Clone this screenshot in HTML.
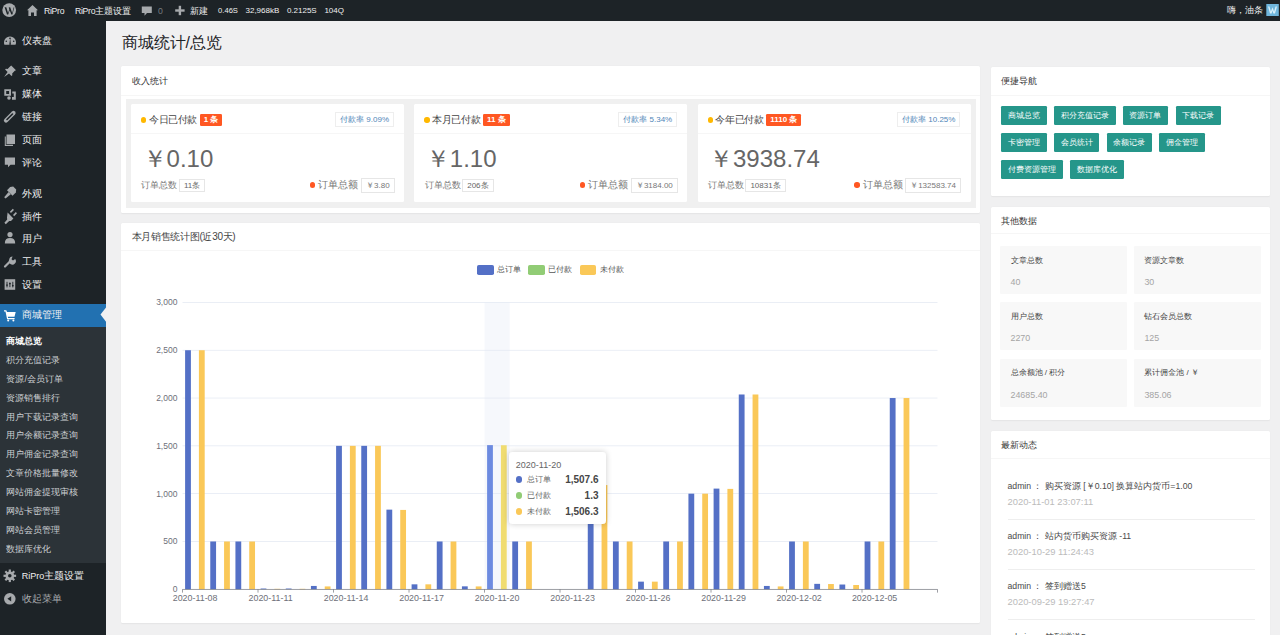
<!DOCTYPE html><html><head><meta charset="utf-8"><style>
html,body{margin:0;padding:0;}
body{width:1280px;height:635px;overflow:hidden;background:#f0f0f1;position:relative;font-family:"Liberation Sans",sans-serif;}
.t{position:absolute;white-space:nowrap;}
.b{position:absolute;box-sizing:border-box;}
svg{position:absolute;left:0;top:0;}
</style></head><body>
<div class="b" style="left:0.00px;top:0.00px;width:1280.00px;height:20.80px;background:#1d2327;"></div>
<div class="t" style="left:44.00px;top:4.00px;line-height:14px;height:14px;font-size:8.67px;color:#f0f0f1;font-weight:normal;letter-spacing:-0.3px;">RiPro</div>
<div class="t" style="left:75.00px;top:4.00px;line-height:14px;height:14px;font-size:8.67px;color:#f0f0f1;font-weight:normal;"><span style="font-size:8.67px;letter-spacing:-0.3px">RiPro</span>主题设置</div>
<div class="t" style="left:158.00px;top:4.00px;line-height:14px;height:14px;font-size:8.67px;color:#777c80;font-weight:normal;">0</div>
<div class="t" style="left:190.40px;top:4.00px;line-height:14px;height:14px;font-size:8.67px;color:#f0f0f1;font-weight:normal;">新建</div>
<div class="t" style="left:218.10px;top:4.10px;line-height:14px;height:14px;font-size:7.6px;color:#f0f0f1;font-weight:normal;">0.46S</div>
<div class="t" style="left:245.50px;top:4.10px;line-height:14px;height:14px;font-size:8.0px;color:#f0f0f1;font-weight:normal;">32,968kB</div>
<div class="t" style="left:286.90px;top:4.10px;line-height:14px;height:14px;font-size:8.0px;color:#f0f0f1;font-weight:normal;">0.2125S</div>
<div class="t" style="left:324.40px;top:4.10px;line-height:14px;height:14px;font-size:8.0px;color:#f0f0f1;font-weight:normal;">104Q</div>
<div class="t" style="left:1226.90px;top:3.00px;line-height:14px;height:14px;font-size:8.67px;color:#f0f0f1;font-weight:normal;">嗨，油条</div>
<div class="b" style="left:0.00px;top:20.80px;width:106.00px;height:614.20px;background:#1d2327;"></div>
<div class="b" style="left:0.00px;top:303.60px;width:106.00px;height:23.30px;background:#2271b1;"></div>
<div class="b" style="left:0.00px;top:326.90px;width:106.00px;height:236.60px;background:#2c3338;"></div>
<div class="t" style="left:21.80px;top:34.20px;line-height:14px;height:14px;font-size:10.0px;color:#f0f0f1;font-weight:normal;">仪表盘</div>
<div class="t" style="left:21.80px;top:64.30px;line-height:14px;height:14px;font-size:10.0px;color:#f0f0f1;font-weight:normal;">文章</div>
<div class="t" style="left:21.80px;top:87.30px;line-height:14px;height:14px;font-size:10.0px;color:#f0f0f1;font-weight:normal;">媒体</div>
<div class="t" style="left:21.80px;top:110.20px;line-height:14px;height:14px;font-size:10.0px;color:#f0f0f1;font-weight:normal;">链接</div>
<div class="t" style="left:21.80px;top:133.30px;line-height:14px;height:14px;font-size:10.0px;color:#f0f0f1;font-weight:normal;">页面</div>
<div class="t" style="left:21.80px;top:156.20px;line-height:14px;height:14px;font-size:10.0px;color:#f0f0f1;font-weight:normal;">评论</div>
<div class="t" style="left:21.80px;top:187.30px;line-height:14px;height:14px;font-size:10.0px;color:#f0f0f1;font-weight:normal;">外观</div>
<div class="t" style="left:21.80px;top:210.10px;line-height:14px;height:14px;font-size:10.0px;color:#f0f0f1;font-weight:normal;">插件</div>
<div class="t" style="left:21.80px;top:232.40px;line-height:14px;height:14px;font-size:10.0px;color:#f0f0f1;font-weight:normal;">用户</div>
<div class="t" style="left:21.80px;top:255.20px;line-height:14px;height:14px;font-size:10.0px;color:#f0f0f1;font-weight:normal;">工具</div>
<div class="t" style="left:21.80px;top:278.30px;line-height:14px;height:14px;font-size:10.0px;color:#f0f0f1;font-weight:normal;">设置</div>
<div class="t" style="left:21.80px;top:308.40px;line-height:14px;height:14px;font-size:10.0px;color:#f0f0f1;font-weight:normal;">商城管理</div>
<div class="t" style="left:6.40px;top:333.80px;line-height:14px;height:14px;font-size:8.67px;color:#ffffff;font-weight:bold;">商城总览</div>
<div class="t" style="left:6.40px;top:352.73px;line-height:14px;height:14px;font-size:8.67px;color:#cdd0d3;font-weight:normal;">积分充值记录</div>
<div class="t" style="left:6.40px;top:371.66px;line-height:14px;height:14px;font-size:8.67px;color:#cdd0d3;font-weight:normal;">资源/会员订单</div>
<div class="t" style="left:6.40px;top:390.59px;line-height:14px;height:14px;font-size:8.67px;color:#cdd0d3;font-weight:normal;">资源销售排行</div>
<div class="t" style="left:6.40px;top:409.52px;line-height:14px;height:14px;font-size:8.67px;color:#cdd0d3;font-weight:normal;">用户下载记录查询</div>
<div class="t" style="left:6.40px;top:428.45px;line-height:14px;height:14px;font-size:8.67px;color:#cdd0d3;font-weight:normal;">用户余额记录查询</div>
<div class="t" style="left:6.40px;top:447.38px;line-height:14px;height:14px;font-size:8.67px;color:#cdd0d3;font-weight:normal;">用户佣金记录查询</div>
<div class="t" style="left:6.40px;top:466.31px;line-height:14px;height:14px;font-size:8.67px;color:#cdd0d3;font-weight:normal;">文章价格批量修改</div>
<div class="t" style="left:6.40px;top:485.24px;line-height:14px;height:14px;font-size:8.67px;color:#cdd0d3;font-weight:normal;">网站佣金提现审核</div>
<div class="t" style="left:6.40px;top:504.17px;line-height:14px;height:14px;font-size:8.67px;color:#cdd0d3;font-weight:normal;">网站卡密管理</div>
<div class="t" style="left:6.40px;top:523.10px;line-height:14px;height:14px;font-size:8.67px;color:#cdd0d3;font-weight:normal;">网站会员管理</div>
<div class="t" style="left:6.40px;top:542.03px;line-height:14px;height:14px;font-size:8.67px;color:#cdd0d3;font-weight:normal;">数据库优化</div>
<div class="t" style="left:21.80px;top:568.80px;line-height:14px;height:14px;font-size:10.0px;color:#f0f0f1;font-weight:normal;"><span style="font-size:9.0px">RiPro</span>主题设置</div>
<div class="t" style="left:21.80px;top:591.80px;line-height:14px;height:14px;font-size:10.0px;color:#a7aaad;font-weight:normal;">收起菜单</div>
<div class="t" style="left:121.50px;top:33.00px;line-height:20px;height:20px;font-size:15.85px;color:#1d2327;font-weight:normal;">商城统计/总览</div>
<div class="b" style="left:121.40px;top:66.10px;width:858.70px;height:147.00px;background:#fff;border-radius:1.5px;box-shadow:0 0.67px 1.33px rgba(0,0,0,.05);"></div>
<div class="b" style="left:121.40px;top:94.63px;width:858.70px;height:0.67px;background:#f6f6f6;"></div>
<div class="t" style="left:131.50px;top:73.80px;line-height:14px;height:14px;font-size:9.33px;color:#333;font-weight:normal;">收入统计</div>
<div class="b" style="left:126.10px;top:99.30px;width:849.60px;height:108.70px;background:#f0f0f0;"></div>
<div class="b" style="left:131.10px;top:104.30px;width:273.20px;height:98.20px;background:#fff;border-radius:1.5px;"></div>
<div class="b" style="left:131.10px;top:133.20px;width:273.20px;height:0.67px;background:#f6f6f6;"></div>
<div class="b" style="left:141.10px;top:117.20px;width:5.40px;height:5.40px;background:#FFB800;border-radius:50%;"></div>
<div class="t" style="left:148.90px;top:112.90px;line-height:14px;height:14px;font-size:10px;color:#444;font-weight:normal;letter-spacing:-0.35px;">今日已付款</div>
<div class="t" style="left:199.80px;top:114.3px;height:11.8px;line-height:11.8px;padding:0 4px;background:#FF5722;color:#fff;font-size:8px;font-weight:bold;border-radius:1.33px;">1 条</div>
<div class="t" style="right:886.00px;top:112.4px;height:14.6px;line-height:13.3px;padding:0 4px;box-sizing:border-box;border:0.67px solid #eeeeee;background:#fff;color:#4f86b8;font-size:8px;">付款率 9.09%</div>
<div class="t" style="left:142.60px;top:145.20px;line-height:28px;height:28px;font-size:24px;color:#666;font-weight:normal;">￥0.10</div>
<div class="t" style="left:141.40px;top:178.40px;line-height:14px;height:14px;font-size:8.67px;color:#777;font-weight:normal;">订单总数</div>
<div class="t" style="left:179.00px;top:179.2px;height:12.8px;line-height:11.5px;padding:0 4px;box-sizing:border-box;border:0.67px solid #e6e6e6;background:#fff;color:#666;font-size:8px;">11条</div>
<div class="t" style="right:885.40px;top:177.9px;height:14.7px;display:flex;align-items:center;font-size:10px;color:#777;"><span style="display:inline-block;width:5.5px;height:5.5px;border-radius:50%;background:#FF5722;margin-right:3px;"></span><span style="line-height:14px">订单总额</span><span style="display:inline-block;margin-left:2.6px;height:14.7px;line-height:13.4px;padding:0 4px;box-sizing:border-box;border:0.67px solid #e6e6e6;font-size:8px;">￥3.80</span></div>
<div class="b" style="left:414.30px;top:104.30px;width:273.20px;height:98.20px;background:#fff;border-radius:1.5px;"></div>
<div class="b" style="left:414.30px;top:133.20px;width:273.20px;height:0.67px;background:#f6f6f6;"></div>
<div class="b" style="left:424.30px;top:117.20px;width:5.40px;height:5.40px;background:#FFB800;border-radius:50%;"></div>
<div class="t" style="left:432.10px;top:112.90px;line-height:14px;height:14px;font-size:10px;color:#444;font-weight:normal;letter-spacing:-0.35px;">本月已付款</div>
<div class="t" style="left:483.00px;top:114.3px;height:11.8px;line-height:11.8px;padding:0 4px;background:#FF5722;color:#fff;font-size:8px;font-weight:bold;border-radius:1.33px;">11 条</div>
<div class="t" style="right:602.80px;top:112.4px;height:14.6px;line-height:13.3px;padding:0 4px;box-sizing:border-box;border:0.67px solid #eeeeee;background:#fff;color:#4f86b8;font-size:8px;">付款率 5.34%</div>
<div class="t" style="left:425.80px;top:145.20px;line-height:28px;height:28px;font-size:24px;color:#666;font-weight:normal;">￥1.10</div>
<div class="t" style="left:424.60px;top:178.40px;line-height:14px;height:14px;font-size:8.67px;color:#777;font-weight:normal;">订单总数</div>
<div class="t" style="left:462.20px;top:179.2px;height:12.8px;line-height:11.5px;padding:0 4px;box-sizing:border-box;border:0.67px solid #e6e6e6;background:#fff;color:#666;font-size:8px;">206条</div>
<div class="t" style="right:602.20px;top:177.9px;height:14.7px;display:flex;align-items:center;font-size:10px;color:#777;"><span style="display:inline-block;width:5.5px;height:5.5px;border-radius:50%;background:#FF5722;margin-right:3px;"></span><span style="line-height:14px">订单总额</span><span style="display:inline-block;margin-left:2.6px;height:14.7px;line-height:13.4px;padding:0 4px;box-sizing:border-box;border:0.67px solid #e6e6e6;font-size:8px;">￥3184.00</span></div>
<div class="b" style="left:697.50px;top:104.30px;width:273.20px;height:98.20px;background:#fff;border-radius:1.5px;"></div>
<div class="b" style="left:697.50px;top:133.20px;width:273.20px;height:0.67px;background:#f6f6f6;"></div>
<div class="b" style="left:707.50px;top:117.20px;width:5.40px;height:5.40px;background:#FFB800;border-radius:50%;"></div>
<div class="t" style="left:715.30px;top:112.90px;line-height:14px;height:14px;font-size:10px;color:#444;font-weight:normal;letter-spacing:-0.35px;">今年已付款</div>
<div class="t" style="left:766.20px;top:114.3px;height:11.8px;line-height:11.8px;padding:0 4px;background:#FF5722;color:#fff;font-size:8px;font-weight:bold;border-radius:1.33px;">1110 条</div>
<div class="t" style="right:319.60px;top:112.4px;height:14.6px;line-height:13.3px;padding:0 4px;box-sizing:border-box;border:0.67px solid #eeeeee;background:#fff;color:#4f86b8;font-size:8px;">付款率 10.25%</div>
<div class="t" style="left:709.00px;top:145.20px;line-height:28px;height:28px;font-size:24px;color:#666;font-weight:normal;">￥3938.74</div>
<div class="t" style="left:707.80px;top:178.40px;line-height:14px;height:14px;font-size:8.67px;color:#777;font-weight:normal;">订单总数</div>
<div class="t" style="left:745.40px;top:179.2px;height:12.8px;line-height:11.5px;padding:0 4px;box-sizing:border-box;border:0.67px solid #e6e6e6;background:#fff;color:#666;font-size:8px;">10831条</div>
<div class="t" style="right:319.00px;top:177.9px;height:14.7px;display:flex;align-items:center;font-size:10px;color:#777;"><span style="display:inline-block;width:5.5px;height:5.5px;border-radius:50%;background:#FF5722;margin-right:3px;"></span><span style="line-height:14px">订单总额</span><span style="display:inline-block;margin-left:2.6px;height:14.7px;line-height:13.4px;padding:0 4px;box-sizing:border-box;border:0.67px solid #e6e6e6;font-size:8px;">￥132583.74</span></div>
<div class="b" style="left:121.40px;top:222.50px;width:858.70px;height:400.60px;background:#fff;border-radius:1.5px;box-shadow:0 0.67px 1.33px rgba(0,0,0,.05);"></div>
<div class="b" style="left:121.40px;top:250.33px;width:858.70px;height:0.67px;background:#f6f6f6;"></div>
<div class="t" style="left:131.50px;top:230.20px;line-height:14px;height:14px;font-size:9.33px;color:#333;font-weight:normal;"></div>
<div class="t" style="left:131.50px;top:230.20px;line-height:14px;height:14px;font-size:10px;color:#444;font-weight:normal;letter-spacing:-0.3px;">本月销售统计图(近30天)</div>
<div class="b" style="left:990.60px;top:66.60px;width:279.80px;height:129.70px;background:#fff;border-radius:1.5px;box-shadow:0 0.67px 1.33px rgba(0,0,0,.05);"></div>
<div class="b" style="left:990.60px;top:94.63px;width:279.80px;height:0.67px;background:#f6f6f6;"></div>
<div class="t" style="left:1000.70px;top:74.30px;line-height:14px;height:14px;font-size:9.33px;color:#333;font-weight:normal;">便捷导航</div>
<div class="b" style="left:1001.10px;top:105.60px;width:45.50px;height:19.70px;background:#25968a;border-radius:1.33px;color:#fff;font-size:8px;line-height:19.70px;text-align:center;white-space:nowrap">商城总览</div>
<div class="b" style="left:1053.90px;top:105.60px;width:61.70px;height:19.70px;background:#25968a;border-radius:1.33px;color:#fff;font-size:8px;line-height:19.70px;text-align:center;white-space:nowrap">积分充值记录</div>
<div class="b" style="left:1122.80px;top:105.60px;width:45.30px;height:19.70px;background:#25968a;border-radius:1.33px;color:#fff;font-size:8px;line-height:19.70px;text-align:center;white-space:nowrap">资源订单</div>
<div class="b" style="left:1175.50px;top:105.60px;width:45.40px;height:19.70px;background:#25968a;border-radius:1.33px;color:#fff;font-size:8px;line-height:19.70px;text-align:center;white-space:nowrap">下载记录</div>
<div class="b" style="left:1001.10px;top:132.50px;width:45.50px;height:19.70px;background:#25968a;border-radius:1.33px;color:#fff;font-size:8px;line-height:19.70px;text-align:center;white-space:nowrap">卡密管理</div>
<div class="b" style="left:1053.90px;top:132.50px;width:45.50px;height:19.70px;background:#25968a;border-radius:1.33px;color:#fff;font-size:8px;line-height:19.70px;text-align:center;white-space:nowrap">会员统计</div>
<div class="b" style="left:1106.60px;top:132.50px;width:45.50px;height:19.70px;background:#25968a;border-radius:1.33px;color:#fff;font-size:8px;line-height:19.70px;text-align:center;white-space:nowrap">余额记录</div>
<div class="b" style="left:1159.10px;top:132.50px;width:45.70px;height:19.70px;background:#25968a;border-radius:1.33px;color:#fff;font-size:8px;line-height:19.70px;text-align:center;white-space:nowrap">佣金管理</div>
<div class="b" style="left:1001.10px;top:159.50px;width:61.80px;height:19.80px;background:#25968a;border-radius:1.33px;color:#fff;font-size:8px;line-height:19.80px;text-align:center;white-space:nowrap">付费资源管理</div>
<div class="b" style="left:1070.10px;top:159.50px;width:53.70px;height:19.80px;background:#25968a;border-radius:1.33px;color:#fff;font-size:8px;line-height:19.80px;text-align:center;white-space:nowrap">数据库优化</div>
<div class="b" style="left:990.60px;top:206.50px;width:279.80px;height:213.60px;background:#fff;border-radius:1.5px;box-shadow:0 0.67px 1.33px rgba(0,0,0,.05);"></div>
<div class="b" style="left:990.60px;top:232.63px;width:279.80px;height:0.67px;background:#f6f6f6;"></div>
<div class="t" style="left:1000.70px;top:214.20px;line-height:14px;height:14px;font-size:9.33px;color:#333;font-weight:normal;">其他数据</div>
<div class="b" style="left:1000.10px;top:246.20px;width:127.00px;height:48.00px;background:#f8f8f8;border-radius:1.33px;"></div>
<div class="t" style="left:1010.50px;top:253.80px;line-height:14px;height:14px;font-size:8px;color:#444;font-weight:normal;">文章总数</div>
<div class="t" style="left:1010.50px;top:275.10px;line-height:14px;height:14px;font-size:8.9px;color:#a5a5a5;font-weight:normal;">40</div>
<div class="b" style="left:1134.00px;top:246.20px;width:127.00px;height:48.00px;background:#f8f8f8;border-radius:1.33px;"></div>
<div class="t" style="left:1144.40px;top:253.80px;line-height:14px;height:14px;font-size:8px;color:#444;font-weight:normal;">资源文章数</div>
<div class="t" style="left:1144.40px;top:275.10px;line-height:14px;height:14px;font-size:8.9px;color:#a5a5a5;font-weight:normal;">30</div>
<div class="b" style="left:1000.10px;top:302.45px;width:127.00px;height:48.00px;background:#f8f8f8;border-radius:1.33px;"></div>
<div class="t" style="left:1010.50px;top:310.05px;line-height:14px;height:14px;font-size:8px;color:#444;font-weight:normal;">用户总数</div>
<div class="t" style="left:1010.50px;top:331.35px;line-height:14px;height:14px;font-size:8.9px;color:#a5a5a5;font-weight:normal;">2270</div>
<div class="b" style="left:1134.00px;top:302.45px;width:127.00px;height:48.00px;background:#f8f8f8;border-radius:1.33px;"></div>
<div class="t" style="left:1144.40px;top:310.05px;line-height:14px;height:14px;font-size:8px;color:#444;font-weight:normal;">钻石会员总数</div>
<div class="t" style="left:1144.40px;top:331.35px;line-height:14px;height:14px;font-size:8.9px;color:#a5a5a5;font-weight:normal;">125</div>
<div class="b" style="left:1000.10px;top:358.70px;width:127.00px;height:48.00px;background:#f8f8f8;border-radius:1.33px;"></div>
<div class="t" style="left:1010.50px;top:366.30px;line-height:14px;height:14px;font-size:8px;color:#444;font-weight:normal;">总余额池 / 积分</div>
<div class="t" style="left:1010.50px;top:387.60px;line-height:14px;height:14px;font-size:8.9px;color:#a5a5a5;font-weight:normal;">24685.40</div>
<div class="b" style="left:1134.00px;top:358.70px;width:127.00px;height:48.00px;background:#f8f8f8;border-radius:1.33px;"></div>
<div class="t" style="left:1144.40px;top:366.30px;line-height:14px;height:14px;font-size:8px;color:#444;font-weight:normal;">累计佣金池 / ￥</div>
<div class="t" style="left:1144.40px;top:387.60px;line-height:14px;height:14px;font-size:8.9px;color:#a5a5a5;font-weight:normal;">385.06</div>
<div class="b" style="left:990.60px;top:430.50px;width:279.80px;height:269.50px;background:#fff;border-radius:1.5px;box-shadow:0 0.67px 1.33px rgba(0,0,0,.05);"></div>
<div class="b" style="left:990.60px;top:458.33px;width:279.80px;height:0.67px;background:#f6f6f6;"></div>
<div class="t" style="left:1000.70px;top:438.20px;line-height:14px;height:14px;font-size:9.33px;color:#333;font-weight:normal;">最新动态</div>
<div class="t" style="left:1007.50px;top:479.20px;line-height:14px;height:14px;font-size:8.67px;color:#4a4a4a;font-weight:normal;">admin ： 购买资源 [￥0.10] 换算站内货币=1.00</div>
<div class="t" style="left:1007.50px;top:494.60px;line-height:14px;height:14px;font-size:9.4px;color:#bbb;font-weight:normal;">2020-11-01 23:07:11</div>
<div class="b" style="left:1007.50px;top:519.00px;width:247.00px;height:0.67px;background:#eee;"></div>
<div class="t" style="left:1007.50px;top:529.30px;line-height:14px;height:14px;font-size:8.67px;color:#4a4a4a;font-weight:normal;">admin ： 站内货币购买资源 -11</div>
<div class="t" style="left:1007.50px;top:544.70px;line-height:14px;height:14px;font-size:9.4px;color:#bbb;font-weight:normal;">2020-10-29 11:24:43</div>
<div class="b" style="left:1007.50px;top:569.10px;width:247.00px;height:0.67px;background:#eee;"></div>
<div class="t" style="left:1007.50px;top:579.40px;line-height:14px;height:14px;font-size:8.67px;color:#4a4a4a;font-weight:normal;">admin ： 签到赠送5</div>
<div class="t" style="left:1007.50px;top:594.80px;line-height:14px;height:14px;font-size:9.4px;color:#bbb;font-weight:normal;">2020-09-29 19:27:47</div>
<div class="b" style="left:1007.50px;top:619.20px;width:247.00px;height:0.67px;background:#eee;"></div>
<div class="t" style="left:1007.50px;top:629.50px;line-height:14px;height:14px;font-size:8.67px;color:#4a4a4a;font-weight:normal;">admin ： 签到赠送5</div>
<div class="t" style="left:1007.50px;top:644.90px;line-height:14px;height:14px;font-size:9.4px;color:#bbb;font-weight:normal;">2020-09-28 19:27:47</div>
<div class="b" style="left:1007.50px;top:669.30px;width:247.00px;height:0.67px;background:#eee;"></div>
<svg width="1280" height="635" viewBox="0 0 1280 635">
<rect x="484.50" y="302.40" width="25.17" height="286.90" fill="rgba(210,219,238,0.2)"/>
<rect x="182.50" y="541.15" width="755.00" height="0.67" fill="#E0E6F1"/>
<rect x="182.50" y="493.34" width="755.00" height="0.67" fill="#E0E6F1"/>
<rect x="182.50" y="445.52" width="755.00" height="0.67" fill="#E0E6F1"/>
<rect x="182.50" y="397.70" width="755.00" height="0.67" fill="#E0E6F1"/>
<rect x="182.50" y="349.89" width="755.00" height="0.67" fill="#E0E6F1"/>
<rect x="182.50" y="302.07" width="755.00" height="0.67" fill="#E0E6F1"/>
<rect x="185.10" y="350.22" width="5.80" height="239.08" fill="#5470c6"/>
<rect x="198.90" y="350.22" width="5.80" height="239.08" fill="#fac858"/>
<rect x="210.27" y="541.48" width="5.80" height="47.82" fill="#5470c6"/>
<rect x="224.07" y="541.48" width="5.80" height="47.82" fill="#fac858"/>
<rect x="235.43" y="541.48" width="5.80" height="47.82" fill="#5470c6"/>
<rect x="249.23" y="541.48" width="5.80" height="47.82" fill="#fac858"/>
<rect x="260.60" y="588.53" width="5.80" height="0.77" fill="#5470c6"/>
<rect x="274.40" y="588.82" width="5.80" height="0.48" fill="#fac858"/>
<rect x="285.77" y="588.53" width="5.80" height="0.77" fill="#5470c6"/>
<rect x="299.57" y="588.82" width="5.80" height="0.48" fill="#fac858"/>
<rect x="310.93" y="585.95" width="5.80" height="3.35" fill="#5470c6"/>
<rect x="324.73" y="586.43" width="5.80" height="2.87" fill="#fac858"/>
<rect x="336.10" y="445.85" width="5.80" height="143.45" fill="#5470c6"/>
<rect x="349.90" y="445.85" width="5.80" height="143.45" fill="#fac858"/>
<rect x="361.27" y="445.85" width="5.80" height="143.45" fill="#5470c6"/>
<rect x="375.07" y="445.85" width="5.80" height="143.45" fill="#fac858"/>
<rect x="386.43" y="509.64" width="5.80" height="79.66" fill="#5470c6"/>
<rect x="400.23" y="509.92" width="5.80" height="79.38" fill="#fac858"/>
<rect x="411.60" y="584.33" width="5.80" height="4.97" fill="#5470c6"/>
<rect x="425.40" y="584.33" width="5.80" height="4.97" fill="#fac858"/>
<rect x="436.77" y="541.48" width="5.80" height="47.82" fill="#5470c6"/>
<rect x="450.57" y="541.48" width="5.80" height="47.82" fill="#fac858"/>
<rect x="461.93" y="586.34" width="5.80" height="2.96" fill="#5470c6"/>
<rect x="475.73" y="586.43" width="5.80" height="2.87" fill="#fac858"/>
<rect x="487.10" y="445.12" width="5.80" height="144.18" fill="#6d8be0"/>
<rect x="494.00" y="589.18" width="5.80" height="0.12" fill="#a7e28a"/>
<rect x="500.90" y="445.25" width="5.80" height="144.05" fill="#f0dc70"/>
<rect x="512.27" y="541.48" width="5.80" height="47.82" fill="#5470c6"/>
<rect x="526.07" y="541.48" width="5.80" height="47.82" fill="#fac858"/>
<rect x="587.77" y="485.06" width="5.80" height="104.24" fill="#5470c6"/>
<rect x="601.57" y="485.06" width="5.80" height="104.24" fill="#fac858"/>
<rect x="612.93" y="541.48" width="5.80" height="47.82" fill="#5470c6"/>
<rect x="626.73" y="541.48" width="5.80" height="47.82" fill="#fac858"/>
<rect x="638.10" y="581.65" width="5.80" height="7.65" fill="#5470c6"/>
<rect x="651.90" y="581.65" width="5.80" height="7.65" fill="#fac858"/>
<rect x="663.27" y="541.48" width="5.80" height="47.82" fill="#5470c6"/>
<rect x="677.07" y="541.48" width="5.80" height="47.82" fill="#fac858"/>
<rect x="688.43" y="493.67" width="5.80" height="95.63" fill="#5470c6"/>
<rect x="702.23" y="493.67" width="5.80" height="95.63" fill="#fac858"/>
<rect x="713.60" y="488.60" width="5.80" height="100.70" fill="#5470c6"/>
<rect x="727.40" y="488.88" width="5.80" height="100.41" fill="#fac858"/>
<rect x="738.77" y="394.49" width="5.80" height="194.81" fill="#5470c6"/>
<rect x="752.57" y="394.49" width="5.80" height="194.81" fill="#fac858"/>
<rect x="763.93" y="585.95" width="5.80" height="3.35" fill="#5470c6"/>
<rect x="777.73" y="586.43" width="5.80" height="2.87" fill="#fac858"/>
<rect x="789.10" y="541.48" width="5.80" height="47.82" fill="#5470c6"/>
<rect x="802.90" y="541.48" width="5.80" height="47.82" fill="#fac858"/>
<rect x="814.27" y="583.85" width="5.80" height="5.45" fill="#5470c6"/>
<rect x="828.07" y="584.04" width="5.80" height="5.26" fill="#fac858"/>
<rect x="839.43" y="584.52" width="5.80" height="4.78" fill="#5470c6"/>
<rect x="853.23" y="585.00" width="5.80" height="4.30" fill="#fac858"/>
<rect x="864.60" y="541.48" width="5.80" height="47.82" fill="#5470c6"/>
<rect x="878.40" y="541.48" width="5.80" height="47.82" fill="#fac858"/>
<rect x="889.77" y="398.03" width="5.80" height="191.27" fill="#5470c6"/>
<rect x="903.57" y="398.03" width="5.80" height="191.27" fill="#fac858"/>
<rect x="182.50" y="588.97" width="755.00" height="0.67" fill="#6E7079"/>
<rect x="182.17" y="589.30" width="0.67" height="3.33" fill="#6E7079"/>
<rect x="257.67" y="589.30" width="0.67" height="3.33" fill="#6E7079"/>
<rect x="333.17" y="589.30" width="0.67" height="3.33" fill="#6E7079"/>
<rect x="408.67" y="589.30" width="0.67" height="3.33" fill="#6E7079"/>
<rect x="484.17" y="589.30" width="0.67" height="3.33" fill="#6E7079"/>
<rect x="559.67" y="589.30" width="0.67" height="3.33" fill="#6E7079"/>
<rect x="635.17" y="589.30" width="0.67" height="3.33" fill="#6E7079"/>
<rect x="710.67" y="589.30" width="0.67" height="3.33" fill="#6E7079"/>
<rect x="786.17" y="589.30" width="0.67" height="3.33" fill="#6E7079"/>
<rect x="861.67" y="589.30" width="0.67" height="3.33" fill="#6E7079"/>
<rect x="937.17" y="589.30" width="0.67" height="3.33" fill="#6E7079"/>
</svg>
<div class="t" style="right:1102.60px;top:584.30px;line-height:10px;height:10px;font-size:8.5px;color:#6E7079;font-weight:normal;text-align:right;">0</div>
<div class="t" style="right:1102.60px;top:536.48px;line-height:10px;height:10px;font-size:8.5px;color:#6E7079;font-weight:normal;text-align:right;">500</div>
<div class="t" style="right:1102.60px;top:488.67px;line-height:10px;height:10px;font-size:8.5px;color:#6E7079;font-weight:normal;text-align:right;">1,000</div>
<div class="t" style="right:1102.60px;top:440.85px;line-height:10px;height:10px;font-size:8.5px;color:#6E7079;font-weight:normal;text-align:right;">1,500</div>
<div class="t" style="right:1102.60px;top:393.03px;line-height:10px;height:10px;font-size:8.5px;color:#6E7079;font-weight:normal;text-align:right;">2,000</div>
<div class="t" style="right:1102.60px;top:345.22px;line-height:10px;height:10px;font-size:8.5px;color:#6E7079;font-weight:normal;text-align:right;">2,500</div>
<div class="t" style="right:1102.60px;top:297.40px;line-height:10px;height:10px;font-size:8.5px;color:#6E7079;font-weight:normal;text-align:right;">3,000</div>
<div class="t" style="left:-4.92px;width:400px;text-align:center;top:593.10px;line-height:10px;height:10px;font-size:8.9px;color:#6E7079;font-weight:normal;">2020-11-08</div>
<div class="t" style="left:70.58px;width:400px;text-align:center;top:593.10px;line-height:10px;height:10px;font-size:8.9px;color:#6E7079;font-weight:normal;">2020-11-11</div>
<div class="t" style="left:146.08px;width:400px;text-align:center;top:593.10px;line-height:10px;height:10px;font-size:8.9px;color:#6E7079;font-weight:normal;">2020-11-14</div>
<div class="t" style="left:221.58px;width:400px;text-align:center;top:593.10px;line-height:10px;height:10px;font-size:8.9px;color:#6E7079;font-weight:normal;">2020-11-17</div>
<div class="t" style="left:297.08px;width:400px;text-align:center;top:593.10px;line-height:10px;height:10px;font-size:8.9px;color:#6E7079;font-weight:normal;">2020-11-20</div>
<div class="t" style="left:372.58px;width:400px;text-align:center;top:593.10px;line-height:10px;height:10px;font-size:8.9px;color:#6E7079;font-weight:normal;">2020-11-23</div>
<div class="t" style="left:448.08px;width:400px;text-align:center;top:593.10px;line-height:10px;height:10px;font-size:8.9px;color:#6E7079;font-weight:normal;">2020-11-26</div>
<div class="t" style="left:523.58px;width:400px;text-align:center;top:593.10px;line-height:10px;height:10px;font-size:8.9px;color:#6E7079;font-weight:normal;">2020-11-29</div>
<div class="t" style="left:599.08px;width:400px;text-align:center;top:593.10px;line-height:10px;height:10px;font-size:8.9px;color:#6E7079;font-weight:normal;">2020-12-02</div>
<div class="t" style="left:674.58px;width:400px;text-align:center;top:593.10px;line-height:10px;height:10px;font-size:8.9px;color:#6E7079;font-weight:normal;">2020-12-05</div>
<div class="b" style="left:477.3px;top:265.4px;width:16.67px;height:9.33px;background:#5470c6;border-radius:1.8px"></div>
<div class="t" style="left:497.20px;top:265.00px;line-height:10px;height:10px;font-size:8px;color:#555;font-weight:normal;">总订单</div>
<div class="b" style="left:528.4px;top:265.4px;width:16.67px;height:9.33px;background:#91cc75;border-radius:1.8px"></div>
<div class="t" style="left:548.30px;top:265.00px;line-height:10px;height:10px;font-size:8px;color:#555;font-weight:normal;">已付款</div>
<div class="b" style="left:579.6px;top:265.4px;width:16.67px;height:9.33px;background:#fac858;border-radius:1.8px"></div>
<div class="t" style="left:599.50px;top:265.00px;line-height:10px;height:10px;font-size:8px;color:#555;font-weight:normal;">未付款</div>
<div class="b" style="left:508.5px;top:452px;width:97.7px;height:72px;background:#fff;border-radius:2.67px;box-shadow:0 0 6.67px rgba(0,0,0,.2);border:0.67px solid #fff"></div>
<div class="t" style="left:515.80px;top:458.60px;line-height:12px;height:12px;font-size:9.0px;color:#666;font-weight:normal;">2020-11-20</div>
<div class="b" style="left:515.5px;top:476.17px;width:6.67px;height:6.67px;border-radius:50%;background:#5470c6"></div>
<div class="t" style="left:526.50px;top:473.50px;line-height:12px;height:12px;font-size:8.0px;color:#666;font-weight:normal;">总订单</div>
<div class="t" style="right:681.50px;top:473.50px;line-height:12px;height:12px;font-size:10px;color:#464646;font-weight:bold;text-align:right;">1,507.6</div>
<div class="b" style="left:515.5px;top:492.17px;width:6.67px;height:6.67px;border-radius:50%;background:#91cc75"></div>
<div class="t" style="left:526.50px;top:489.50px;line-height:12px;height:12px;font-size:8.0px;color:#666;font-weight:normal;">已付款</div>
<div class="t" style="right:681.50px;top:489.50px;line-height:12px;height:12px;font-size:10px;color:#464646;font-weight:bold;text-align:right;">1.3</div>
<div class="b" style="left:515.5px;top:508.17px;width:6.67px;height:6.67px;border-radius:50%;background:#fac858"></div>
<div class="t" style="left:526.50px;top:505.50px;line-height:12px;height:12px;font-size:8.0px;color:#666;font-weight:normal;">未付款</div>
<div class="t" style="right:681.50px;top:505.50px;line-height:12px;height:12px;font-size:10px;color:#464646;font-weight:bold;text-align:right;">1,506.3</div>
<svg width="1280" height="635" viewBox="0 0 1280 635">
<circle cx="9.2" cy="10.1" r="6.9" fill="#a7aaad"/>
<path d="M4.6,7.3 L6.3,7.3 L8.1,12.9 L9.3,9.3 L8.7,7.5 L10.2,7.3 L12.2,13 L13.7,7.3 L14.3,7.5 L12.4,14.6 L11.3,14.6 L9.7,10.3 L8.2,14.6 L7,14.6 Z" fill="#1d2327"/>
<path d="M32.5,4.9 L38,10.3 L36.6,10.3 L36.6,15.9 L34,15.9 L34,12.5 L31,12.5 L31,15.9 L28.4,15.9 L28.4,10.3 L27,10.3 Z" fill="#a7aaad"/>
<path d="M141.8,6.4 L151.8,6.4 L151.8,13 L147,13 L144.5,15.8 L144.5,13 L141.8,13 Z" fill="#a7aaad"/>
<rect x="175.2" y="9.3" width="9.4" height="2.4" fill="#a7aaad"/><rect x="178.7" y="5.8" width="2.4" height="9.4" fill="#a7aaad"/>
<rect x="1266.3" y="4" width="12.5" height="12" fill="#6fb6dc"/>
<path d="M1268,6.5 L1269.5,6.5 L1270.9,11.5 L1272.5,7.2 L1274.1,11.5 L1275.5,6.5 L1277,6.5 L1275,13.5 L1273.4,13.5 L1272.5,10.5 L1271.6,13.5 L1270,13.5 Z" fill="#d8f0fa"/>
<path d="M4.46,44.8 A6,6 0 1,1 15.54,44.8 Z" fill="#a7aaad"/>
<path d="M9.2,44.8 L10.2,38.5 L11,44.8 Z" fill="#1d2327"/><circle cx="6.3" cy="41.2" r="0.8" fill="#1d2327"/><circle cx="13.7" cy="41.2" r="0.8" fill="#1d2327"/><circle cx="10" cy="38.4" r="0.8" fill="#1d2327"/>
<path d="M11.2,65.4 L16,70.2 L14.8,70.8 L12.2,73.5 L12.3,75.2 L11.5,76 L9,73.5 L4.1,77 L7.6,72.1 L5.1,69.6 L5.9,68.8 L7.6,68.9 L10.3,66.3 Z" fill="#a7aaad"/>
<path d="M4.3,89.2 L11,89.2 L11,95.8 L4.3,95.8 Z M6.2,91 L6.2,94 L9.1,94 L9.1,91 Z" fill="#a7aaad" fill-rule="evenodd"/>
<path d="M12.3,91.5 L15.8,91.5 L15.8,99.7 L12,99.7 L12,97 L13.8,97 L13.8,93.6 L12.3,93.6 Z" fill="#a7aaad"/><circle cx="9" cy="98" r="1.8" fill="#a7aaad"/>
<path d="M6,120.5 L13.5,113" stroke="#a7aaad" stroke-width="4.2" stroke-linecap="round" fill="none"/><path d="M7,119.5 L12.5,114" stroke="#1d2327" stroke-width="1.6" stroke-linecap="round"/>
<path d="M6.5,134.5 L15,134.5 L15,144 L6.5,144 Z" fill="#a7aaad"/><path d="M4.8,136.5 L5.8,136.5 L5.8,144.8 L13,144.8 L13,146 L4.8,146 Z" fill="#a7aaad"/>
<path d="M4.8,157.5 L15,157.5 L15,164.7 L10.5,164.7 L8,167.3 L8,164.7 L4.8,164.7 Z" fill="#a7aaad"/>
<path d="M10.2,187 L13.2,186.6 L16.2,189.6 L15.8,192.6 L12.6,195.8 L7,190.2 Z" fill="#a7aaad"/><path d="M4.2,197.2 L8.6,192 L10.8,194.2 L5.6,198.6 Z" fill="#a7aaad"/>
<path d="M7.6,212.6 L13.4,218.4 L11,221 L9.2,221 L5.8,224.2 L4.4,222.8 L7.2,219.6 L7,217.4 Z" fill="#a7aaad"/><path d="M10.4,212.4 L13.4,209.4 M13.6,215.6 L16.4,212.6" stroke="#a7aaad" stroke-width="1.6" fill="none"/>
<circle cx="10" cy="234.6" r="2.6" fill="#a7aaad"/><path d="M4.8,243.4 Q4.8,238 10,238 Q15.2,238 15.2,243.4 Z" fill="#a7aaad"/>
<path d="M5,266.5 L10.5,261" stroke="#a7aaad" stroke-width="2.2" stroke-linecap="round"/><path d="M9.2,259.6 A3.5,3.5 0 1,0 15.2,259 L13,260.5 L11.5,259.2 L12.6,256.6 A3.5,3.5 0 0,0 9.2,259.6 Z" fill="#a7aaad"/>
<path d="M4.6,279.2 L15.2,279.2 L15.2,289.8 L4.6,289.8 Z" fill="#a7aaad"/><path d="M7,281.8 L7,287.4 M9.9,282.4 L9.9,287.2 M12.8,281.8 L12.8,287.4" stroke="#1d2327" stroke-width="0.9"/><path d="M6.2,285.2 L7.8,285.2 M9.1,283.6 L10.7,283.6 M12,285.6 L13.6,285.6" stroke="#1d2327" stroke-width="1.2"/>
<path d="M4,310.2 L6.3,310.2 L7,312 L15.7,312 L14.5,316.8 L7.8,316.8 L8.1,318 L14.6,318 L14.6,319.2 L7.1,319.2 L5.5,311.4 L4,311.4 Z" fill="#fff"/><circle cx="8.2" cy="320.6" r="1" fill="#fff"/><circle cx="13.4" cy="320.6" r="1" fill="#fff"/>
<path d="M106,307.5 L100.5,314.6 L106,321.7 Z" fill="#f0f0f1"/>
<g transform="translate(9.8,575.8)">
<rect x="-1.1" y="-6.3" width="2.2" height="3" fill="#a7aaad" transform="rotate(0)"/>
<rect x="-1.1" y="-6.3" width="2.2" height="3" fill="#a7aaad" transform="rotate(45)"/>
<rect x="-1.1" y="-6.3" width="2.2" height="3" fill="#a7aaad" transform="rotate(90)"/>
<rect x="-1.1" y="-6.3" width="2.2" height="3" fill="#a7aaad" transform="rotate(135)"/>
<rect x="-1.1" y="-6.3" width="2.2" height="3" fill="#a7aaad" transform="rotate(180)"/>
<rect x="-1.1" y="-6.3" width="2.2" height="3" fill="#a7aaad" transform="rotate(225)"/>
<rect x="-1.1" y="-6.3" width="2.2" height="3" fill="#a7aaad" transform="rotate(270)"/>
<rect x="-1.1" y="-6.3" width="2.2" height="3" fill="#a7aaad" transform="rotate(315)"/>
<circle r="4.4" fill="#a7aaad"/><circle r="1.8" fill="#1d2327"/></g>
<circle cx="9.8" cy="598.8" r="5.8" fill="#a7aaad"/><path d="M7.4,598.8 L11.2,596.2 L11.2,601.4 Z" fill="#1d2327"/>
</svg>
</body></html>
